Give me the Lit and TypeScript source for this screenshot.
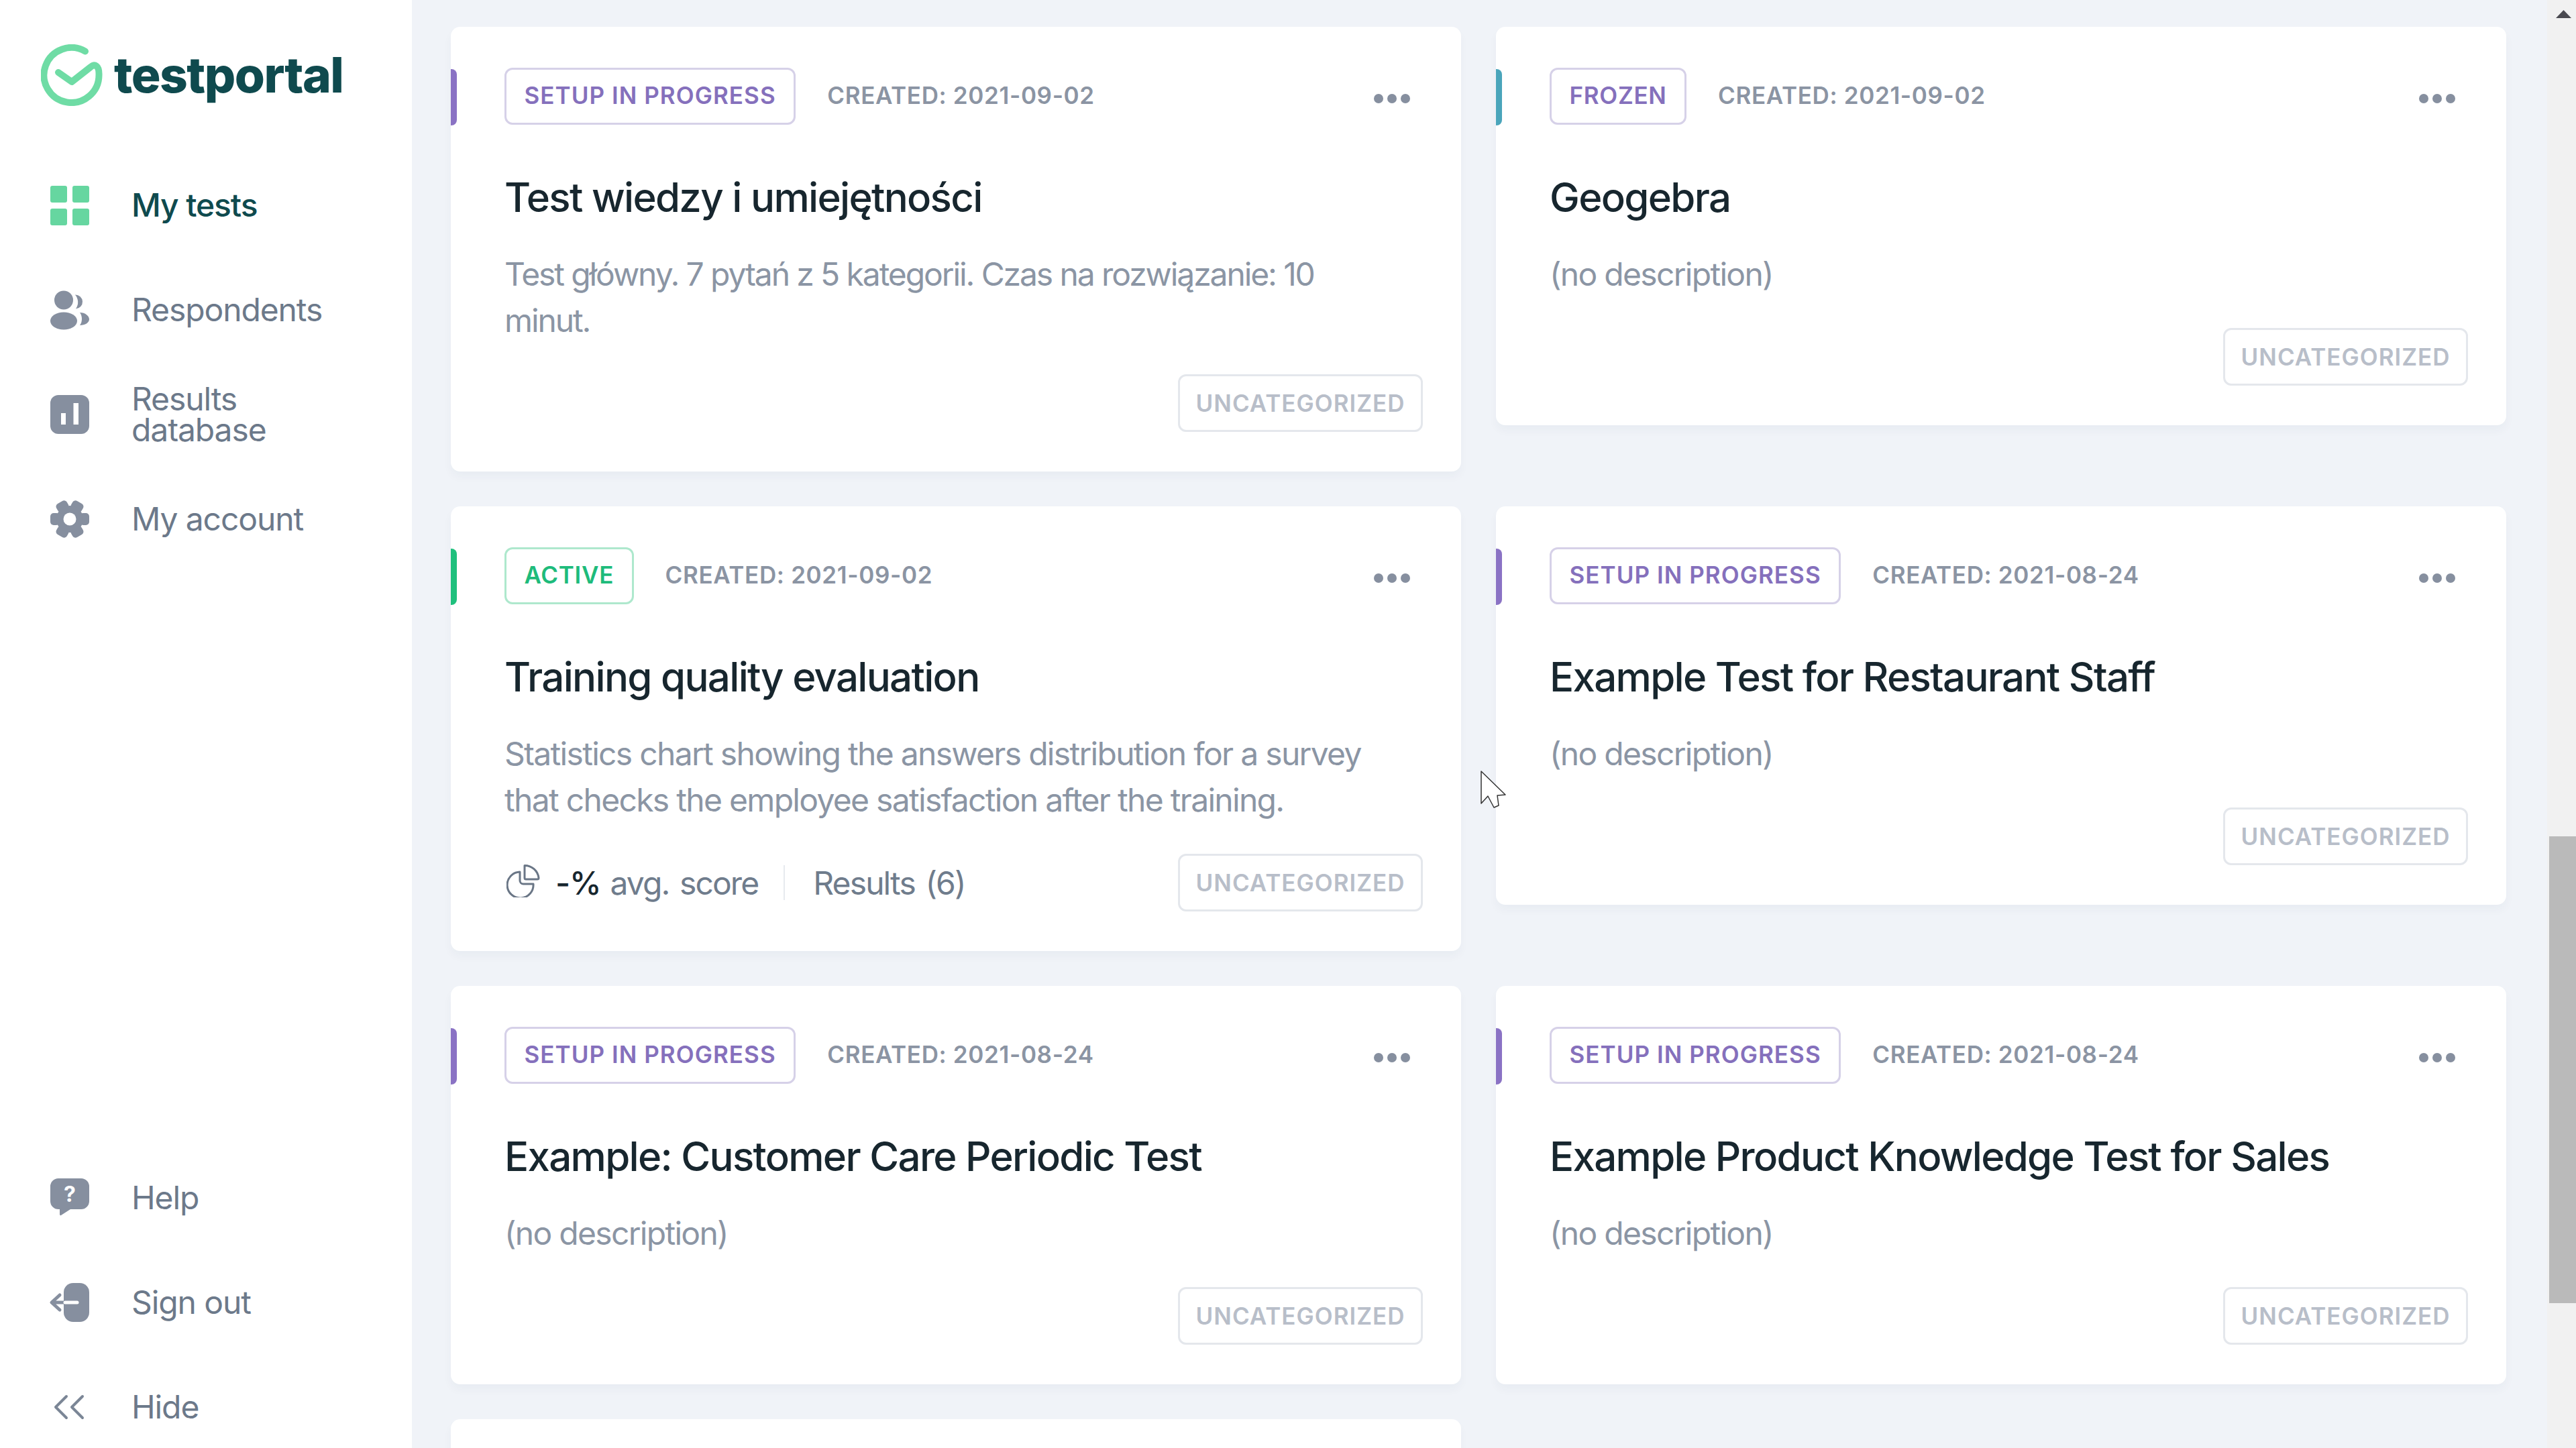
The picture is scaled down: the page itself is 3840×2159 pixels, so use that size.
import { LitElement, html, css, svg } from "lit";
import { customElement } from "lit/decorators.js";

interface Card {
  status: "setup" | "frozen" | "active";
  label: string;
  created: string;
  title: string;
  desc: string;
  stats?: boolean;
  tight?: boolean;
}

const CARDS: Card[] = [
  { status: "setup", label: "SETUP IN PROGRESS", created: "2021-09-02", title: "Test wiedzy i umiejętności", desc: "Test główny. 7 pytań z 5 kategorii. Czas na rozwiązanie: 10 minut.", tight: true },
  { status: "frozen", label: "FROZEN", created: "2021-09-02", title: "Geogebra", desc: "(no description)" },
  { status: "active", label: "ACTIVE", created: "2021-09-02", title: "Training quality evaluation", desc: "Statistics chart showing the answers distribution for a survey that checks the employee satisfaction after the training.", stats: true },
  { status: "setup", label: "SETUP IN PROGRESS", created: "2021-08-24", title: "Example Test for Restaurant Staff", desc: "(no description)" },
  { status: "setup", label: "SETUP IN PROGRESS", created: "2021-08-24", title: "Example: Customer Care Periodic Test", desc: "(no description)" },
  { status: "setup", label: "SETUP IN PROGRESS", created: "2021-08-24", title: "Example Product Knowledge Test for Sales", desc: "(no description)" },
];

const G = "#868f9f";
const gridIcon = svg`<rect x="0" y="0" width="25" height="25" rx="3" fill="#66d6a0"/><rect x="33" y="0" width="25" height="25" rx="3" fill="#66d6a0"/><rect x="0" y="34" width="25" height="25" rx="3" fill="#66d6a0"/><rect x="33" y="34" width="25" height="25" rx="3" fill="#66d6a0"/>`;
const peopleIcon = svg`<circle cx="20" cy="14.5" r="14" fill="${G}"/><ellipse cx="20" cy="45.5" rx="20" ry="13" fill="${G}"/><path d="M37 6.5A10.5 10.5 0 0 1 38 27.5A17 17 0 0 0 37 6.5Z" fill="${G}"/><path d="M44 33C52 33 58 38 58 43C58 48 52 52 44 52C48 47 48 38 44 33Z" fill="${G}"/>`;
const barsIcon = svg`<rect x="0" y="0" width="58" height="58" rx="12" fill="${G}"/><rect x="16" y="27" width="7" height="17" fill="#fff"/><rect x="34.5" y="12" width="7.5" height="32" fill="#fff"/>`;
const gearIcon = svg`<g fill="${G}">
  ${[0, 60, 120, 180, 240, 300].map((a) => svg`<rect x="44" y="20" width="14" height="18" rx="5" transform="rotate(${a} 29 29)"/>`)}
  <circle cx="29" cy="29" r="20"/></g><circle cx="29" cy="29" r="9.5" fill="#fff"/>`;
const helpIcon = svg`<path d="M12 0H46A12 12 0 0 1 58 12V34A12 12 0 0 1 46 46H30L16 55Q14 56 14 53V46H12A12 12 0 0 1 0 34V12A12 12 0 0 1 12 0Z" fill="${G}"/><text x="29" y="35" text-anchor="middle" font-family="Inter, sans-serif" font-weight="700" font-size="32" fill="#fff">?</text>`;
const signoutIcon = svg`<rect x="20" y="0" width="38" height="58" rx="14" fill="${G}"/><path d="M20 29H3M14 18L2 29L14 40" fill="none" stroke="${G}" stroke-width="5" stroke-linecap="round" stroke-linejoin="round"/><path d="M22 29H40" fill="none" stroke="#fff" stroke-width="5" stroke-linecap="round"/>`;
const hideIcon = svg`<path d="M24 13L8 29L24 45M48 13L32 29L48 45" fill="none" stroke="#7b8696" stroke-width="4" stroke-linecap="round" stroke-linejoin="round"/>`;

const TOP_NAV = [
  { icon: gridIcon, label: "My tests", active: true },
  { icon: peopleIcon, label: "Respondents" },
  { icon: barsIcon, label: "Results database", narrow: true },
  { icon: gearIcon, label: "My account" },
];
const BOTTOM_NAV = [
  { icon: helpIcon, label: "Help" },
  { icon: signoutIcon, label: "Sign out" },
  { icon: hideIcon, label: "Hide" },
];

@customElement("app-root")
export class AppRoot extends LitElement {
  static styles = css`
    :host {
      display: block;
      position: relative;
      width: 3840px;
      height: 2159px;
      overflow: hidden;
      font-family: Inter, "Liberation Sans", sans-serif;
      background: #f0f3f8;
    }
    .layout { display: flex; height: 2159px; }
    .side {
      width: 614px;
      flex: none;
      background: #fff;
      display: flex;
      flex-direction: column;
      box-sizing: border-box;
      padding: 66px 0 11px 61px;
    }
    .logo { display: flex; align-items: flex-start; gap: 17px; height: 190px; }
    .logo svg { width: 92px; height: 92px; flex: none; }
    .logo span {
      font-family: Inter, sans-serif;
      font-weight: 800;
      font-size: 73px;
      line-height: 92px;
      color: #0f4a4e;
      letter-spacing: -1.5px;
    }
    .nav { display: flex; flex-direction: column; gap: 56px; }
    .spacer { flex: 1; }
    .item { display: flex; align-items: center; height: 100px; padding-left: 14px; }
    .item svg { width: 58px; height: 58px; flex: none; overflow: visible; }
    .item span {
      margin-left: 63px;
      font-size: 48px;
      line-height: 46px;
      color: #6c798a;
      letter-spacing: -1.1px;
    }
    .item.narrow span { width: 240px; }
    .item.active span { color: #0f4a4e; font-weight: 500; }

    .main {
      flex: 1;
      padding: 40px 0 0 58px;
      min-width: 0;
    }
    .grid {
      width: 3064px;
      display: grid;
      grid-template-columns: 1506px 1506px;
      column-gap: 52px;
      row-gap: 52px;
      align-items: start;
    }
    .card {
      position: relative;
      background: #fff;
      border-radius: 14px;
      box-shadow: 0 8px 14px rgba(30, 60, 90, 0.035);
      padding: 61px 57px 59px 80px;
      box-sizing: border-box;
    }
    .bar {
      position: absolute;
      left: 0;
      top: 63px;
      width: 9px;
      height: 84px;
      border-radius: 0 8px 8px 0;
    }
    .setup .bar { background: #8a72c4; }
    .frozen .bar { background: #4aa5bb; }
    .active .bar { background: #1fc07d; }
    .head { display: flex; align-items: center; height: 85px; }
    .tag {
      box-sizing: border-box;
      height: 85px;
      display: flex;
      align-items: center;
      padding: 0 26.5px 4px;
      border-radius: 12px;
      border: 3px solid #d6d1e8;
      font-size: 35px;
      font-weight: 600;
      letter-spacing: 1.05px;
      color: #8570bc;
    }
    .frozen .tag { letter-spacing: 0.7px; }
    .active .tag { color: #1ebb7b; border-color: #aee8cd; letter-spacing: 0.7px; }
    .created {
      margin-left: 47px;
      font-size: 35px;
      font-weight: 600;
      letter-spacing: 0.65px;
      color: #8b94a3;
      margin-top: -4px;
    }
    .dots { margin-left: auto; margin-right: 19px; margin-top: 7px; display: flex; gap: 6px; }
    .dots i { width: 14px; height: 14px; border-radius: 50%; background: #868f9f; display: block; }
    h2 {
      margin: 72px 0 0;
      font-size: 60px;
      line-height: 72px;
      font-weight: 500;
      color: #17262e;
      letter-spacing: -1.7px;
    }
    .desc {
      margin: 44px 0 0;
      font-size: 48px;
      line-height: 69px;
      color: #8b95a4;
      padding-right: 50px;
      letter-spacing: -1.7px;
    }
    .desc.tight { letter-spacing: -2.1px; }
    .foot {
      display: flex;
      align-items: center;
      justify-content: space-between;
      margin-top: 46px;
      height: 86px;
    }
    .stats { display: flex; align-items: center; font-size: 48px; color: #6f7c8c; letter-spacing: -1.9px; word-spacing: 4px; }
    .stats svg { width: 50px; height: 50px; margin-left: 3px; margin-right: 23px; margin-top: -6px; }
    .stats b { font-weight: 500; color: #17262e; margin-right: 14px; letter-spacing: -1.2px; }
    .stats .sep { width: 2px; height: 52px; background: #e7eaef; margin: 0 42px 0 38px; }
    .uncat {
      box-sizing: border-box;
      margin-left: auto;
      height: 86px;
      display: flex;
      align-items: center;
      padding: 0 23.5px;
      border-radius: 12px;
      border: 3px solid #e4e7ec;
      font-size: 35px;
      font-weight: 600;
      letter-spacing: 1px;
      color: #b8bec9;
    }
    .stub { height: 200px; }

    .track {
      width: 43px;
      flex: none;
      background: #f1f1f1;
      display: flex;
      flex-direction: column;
      align-items: flex-end;
      position: relative;
    }
    .arrow { position: absolute; top: 15px; left: 13px; width: 23px; height: 12px; }
    .thumb { width: 40px; height: 696px; margin-top: 1247px; background: #bababa; }
    .cursor { position: absolute; left: 2200px; top: 1145px; width: 50px; height: 65px; }
  `;

  private card(c: Card) {
    return html`<article class="card ${c.status}">
      <div class="bar"></div>
      <div class="head">
        <div class="tag">${c.label}</div>
        <div class="created">CREATED: ${c.created}</div>
        <div class="dots"><i></i><i></i><i></i></div>
      </div>
      <h2>${c.title}</h2>
      <p class="desc ${c.tight ? "tight" : ""}">${c.desc}</p>
      <div class="foot">
        ${c.stats
          ? html`<div class="stats">
              <svg viewBox="0 0 50 50" fill="none" stroke="#6a7686" stroke-width="3" stroke-linejoin="round">
                <path d="M20 12A19.5 19.5 0 1 0 40 30H25A5 5 0 0 1 20 25Z"/>
                <path d="M27 2.5A21 21 0 0 1 48 21A2 2 0 0 1 46 23H29A2 2 0 0 1 27 21Z"/>
              </svg>
              <b>-%</b><span>avg. score</span>
              <div class="sep"></div>
              <span>Results (6)</span>
            </div>`
          : ""}
        <div class="uncat">UNCATEGORIZED</div>
      </div>
    </article>`;
  }

  private navItem(n: { icon: unknown; label: string; active?: boolean; narrow?: boolean }) {
    return html`<div class="item ${n.active ? "active" : ""} ${n.narrow ? "narrow" : ""}">
      <svg viewBox="0 0 58 58">${n.icon}</svg>
      <span>${n.label}</span>
    </div>`;
  }

  render() {
    return html`<div class="layout">
        <aside class="side">
          <div class="logo">
            <svg viewBox="0 0 92 92" fill="none" stroke="#6fdca5" stroke-width="10" stroke-linecap="round" stroke-linejoin="round">
              <path d="M66 10.5A41 41 0 1 0 86.5 46C87 31 80 29 74 34L46 56L26 42"/>
            </svg>
            <span>testportal</span>
          </div>
          <nav class="nav">${TOP_NAV.map((n) => this.navItem(n))}</nav>
          <div class="spacer"></div>
          <nav class="nav">${BOTTOM_NAV.map((n) => this.navItem(n))}</nav>
        </aside>
        <main class="main">
          <div class="grid">
            ${CARDS.map((c) => this.card(c))}
            <div class="card stub"></div>
          </div>
        </main>
        <div class="track">
          <svg class="arrow" viewBox="0 0 23 12"><path d="M11.5 0L23 12H0Z" fill="#4a4a50"/></svg>
          <div class="thumb"></div>
        </div>
      </div>
      <svg class="cursor" viewBox="0 0 50 65">
        <path d="M8 5L44 40L32 41L34 56L27 59L18 42L8 53Z" fill="#fff" stroke="#333" stroke-width="1.5" stroke-linejoin="round"/>
      </svg>`;
  }
}
